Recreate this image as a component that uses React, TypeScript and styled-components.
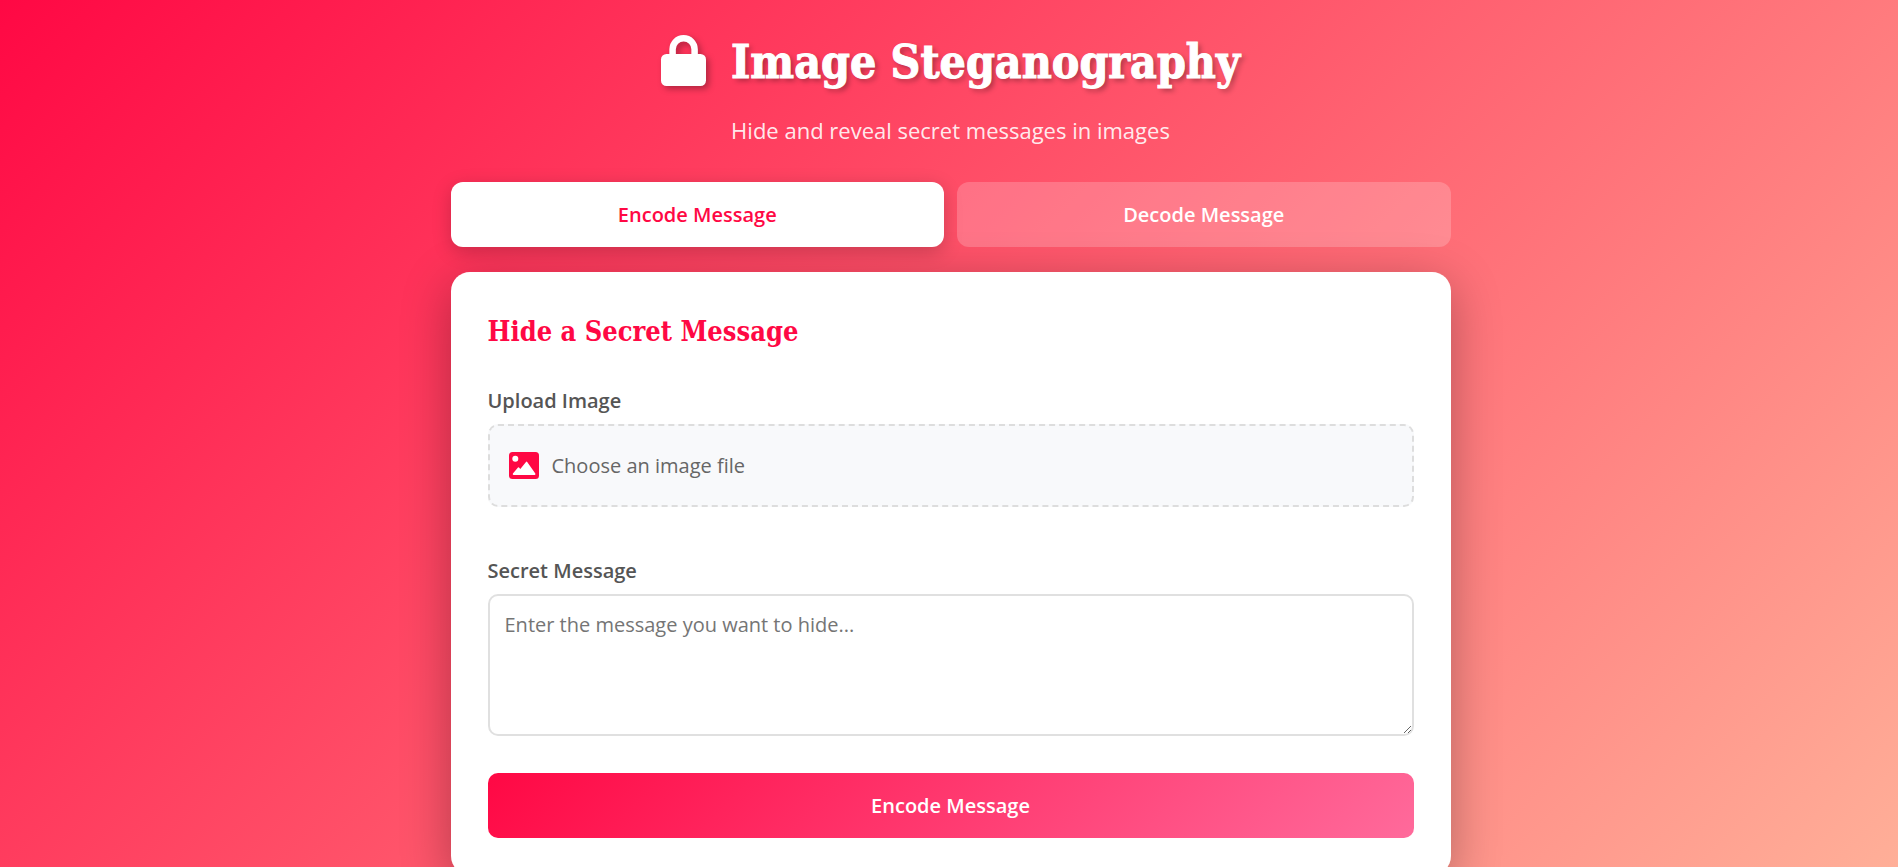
import React, { useState } from "react";
import styled, { createGlobalStyle, css } from "styled-components";

const GlobalStyle = createGlobalStyle`
  *, *::before, *::after { box-sizing: border-box; }
  body {
    margin: 0;
    font-family: "Open Sans", "Noto Sans", sans-serif;
    font-size: 20px;
    line-height: 27px;
    color: #555;
  }
`;

const slab = css`
  font-family: "DejaVu Serif Condensed", "DejaVu Serif", serif;
  font-weight: 700;
`;

const Page = styled.div`
  min-height: 100vh;
  padding: 25px 25px 25px 28px;
  background: linear-gradient(135deg, #ff0844 0%, #ffb199 100%);
`;

const Container = styled.main`
  max-width: 1000px;
  margin: 0 auto;
`;

const Header = styled.header`
  display: flex;
  flex-direction: column;
  align-items: center;
  gap: 19px;
  margin-bottom: 37px;
  text-align: center;
`;

const Title = styled.h1`
  ${slab}
  display: flex;
  align-items: flex-start;
  gap: 25px;
  margin: 0;
  padding-top: 4px;
  font-size: 46px;
  line-height: 67px;
  color: #fff;
  -webkit-text-stroke: 1px #fff;
  text-shadow: 3px 3px 5px rgba(0, 0, 0, 0.3);
`;

const LockSvg = styled.svg`
  width: 45px;
  height: 51px;
  margin-top: 6px;
  flex: none;
  overflow: visible;
  filter: drop-shadow(3px 3px 3px rgba(0, 0, 0, 0.3));
`;

const Subtitle = styled.p`
  margin: 0;
  font-size: 22px;
  line-height: 30px;
  color: rgba(255, 255, 255, 0.9);
`;

const Tabs = styled.div`
  display: flex;
  gap: 13px;
  margin-bottom: 25px;
`;

const Tab = styled.button<{ $active: boolean }>`
  flex: 1;
  padding: 19px;
  border: 0;
  border-radius: 12px;
  font: inherit;
  font-weight: 600;
  cursor: pointer;
  color: ${({ $active }) => ($active ? "#ff0844" : "#fff")};
  background: ${({ $active }) => ($active ? "#fff" : "rgba(255, 255, 255, 0.2)")};
  box-shadow: ${({ $active }) => ($active ? "0 5px 19px rgba(0, 0, 0, 0.2)" : "none")};
`;

const Card = styled.form`
  padding: 37px;
  border-radius: 19px;
  background: #fff;
  box-shadow: 0 12px 50px rgba(0, 0, 0, 0.3);
`;

const CardTitle = styled.h2`
  ${slab}
  margin: 0;
  padding-bottom: 32px;
  font-size: 27px;
  line-height: 46px;
  color: #ff0844;
`;

const Field = styled.div<{ $gap: number }>`
  display: flex;
  flex-direction: column;
  gap: 10px;
  margin-bottom: ${({ $gap }) => $gap}px;
`;

const FieldLabel = styled.label`
  font-weight: 600;
`;

const FileInput = styled.input`
  position: absolute;
  width: 1px;
  height: 1px;
  opacity: 0;
  overflow: hidden;
`;

const FileDrop = styled.label`
  display: flex;
  align-items: center;
  gap: 13px;
  padding: 26px 19px;
  border: 2px dashed #ddd;
  border-radius: 10px;
  background: #f8f9fb;
  color: #666;
  cursor: pointer;
`;

const PictureSvg = styled.svg`
  width: 30px;
  height: 27px;
  flex: none;
`;

const MessageBox = styled.textarea`
  display: block;
  width: 100%;
  height: 142px;
  padding: 15px;
  border: 2px solid #e0e0e0;
  border-radius: 10px;
  background: #fff;
  font: inherit;
  color: #333;
  resize: vertical;
  &::placeholder { color: #757575; }
`;

const SubmitButton = styled.button`
  display: block;
  width: 100%;
  padding: 19px;
  border: 0;
  border-radius: 10px;
  background: linear-gradient(135deg, #ff0844 0%, #ff6a9b 100%);
  font: inherit;
  font-weight: 600;
  color: #fff;
  cursor: pointer;
`;

function LockIcon() {
  return (
    <LockSvg viewBox="0 0 45 51" aria-hidden="true">
      <path d="M11.6 22V14.3a11 11 0 0 1 22 0V22" fill="none" stroke="#fff" strokeWidth="6.5" />
      <rect y="19" width="45" height="32" rx="5.5" fill="#fff" />
    </LockSvg>
  );
}

function PictureIcon() {
  return (
    <PictureSvg viewBox="0 0 30 27" aria-hidden="true">
      <rect width="30" height="27" rx="3.5" fill="#ff0844" />
      <circle cx="6.3" cy="6.8" r="3" fill="#fff" />
      <path
        d="M3.9 21.6 9 15.6q.5-.6 1 0l1.3 1.5 5.7-7.2q.6-.7 1.2 0L26.3 21.6q.6 1.3-.6 1.3H4.6q-1.3 0-.7-1.3Z"
        fill="#fff"
      />
    </PictureSvg>
  );
}

type Mode = "encode" | "decode";

export default function App() {
  const [mode, setMode] = useState<Mode>("encode");
  const [fileName, setFileName] = useState("");
  const encoding = mode === "encode";

  return (
    <>
      <GlobalStyle />
      <Page>
        <Container>
          <Header>
            <Title>
              <LockIcon />
              <span>Image Steganography</span>
            </Title>
            <Subtitle>Hide and reveal secret messages in images</Subtitle>
          </Header>

          <Tabs>
            <Tab type="button" aria-pressed={encoding} $active={encoding} onClick={() => setMode("encode")}>
              Encode Message
            </Tab>
            <Tab type="button" aria-pressed={!encoding} $active={!encoding} onClick={() => setMode("decode")}>
              Decode Message
            </Tab>
          </Tabs>

          <Card onSubmit={(event) => event.preventDefault()}>
            <CardTitle>{encoding ? "Hide a Secret Message" : "Reveal a Secret Message"}</CardTitle>
            <Field $gap={encoding ? 50 : 37}>
              <FieldLabel htmlFor="image-file">Upload Image</FieldLabel>
              <FileDrop htmlFor="image-file">
                <PictureIcon />
                <span>{fileName || "Choose an image file"}</span>
                <FileInput
                  id="image-file"
                  type="file"
                  accept="image/*"
                  onChange={(event) => setFileName(event.target.files?.[0]?.name ?? "")}
                />
              </FileDrop>
            </Field>
            {encoding && (
              <Field $gap={37}>
                <FieldLabel htmlFor="secret-message">Secret Message</FieldLabel>
                <MessageBox id="secret-message" placeholder="Enter the message you want to hide..." />
              </Field>
            )}
            <SubmitButton type="submit">{encoding ? "Encode Message" : "Decode Message"}</SubmitButton>
          </Card>
        </Container>
      </Page>
    </>
  );
}
